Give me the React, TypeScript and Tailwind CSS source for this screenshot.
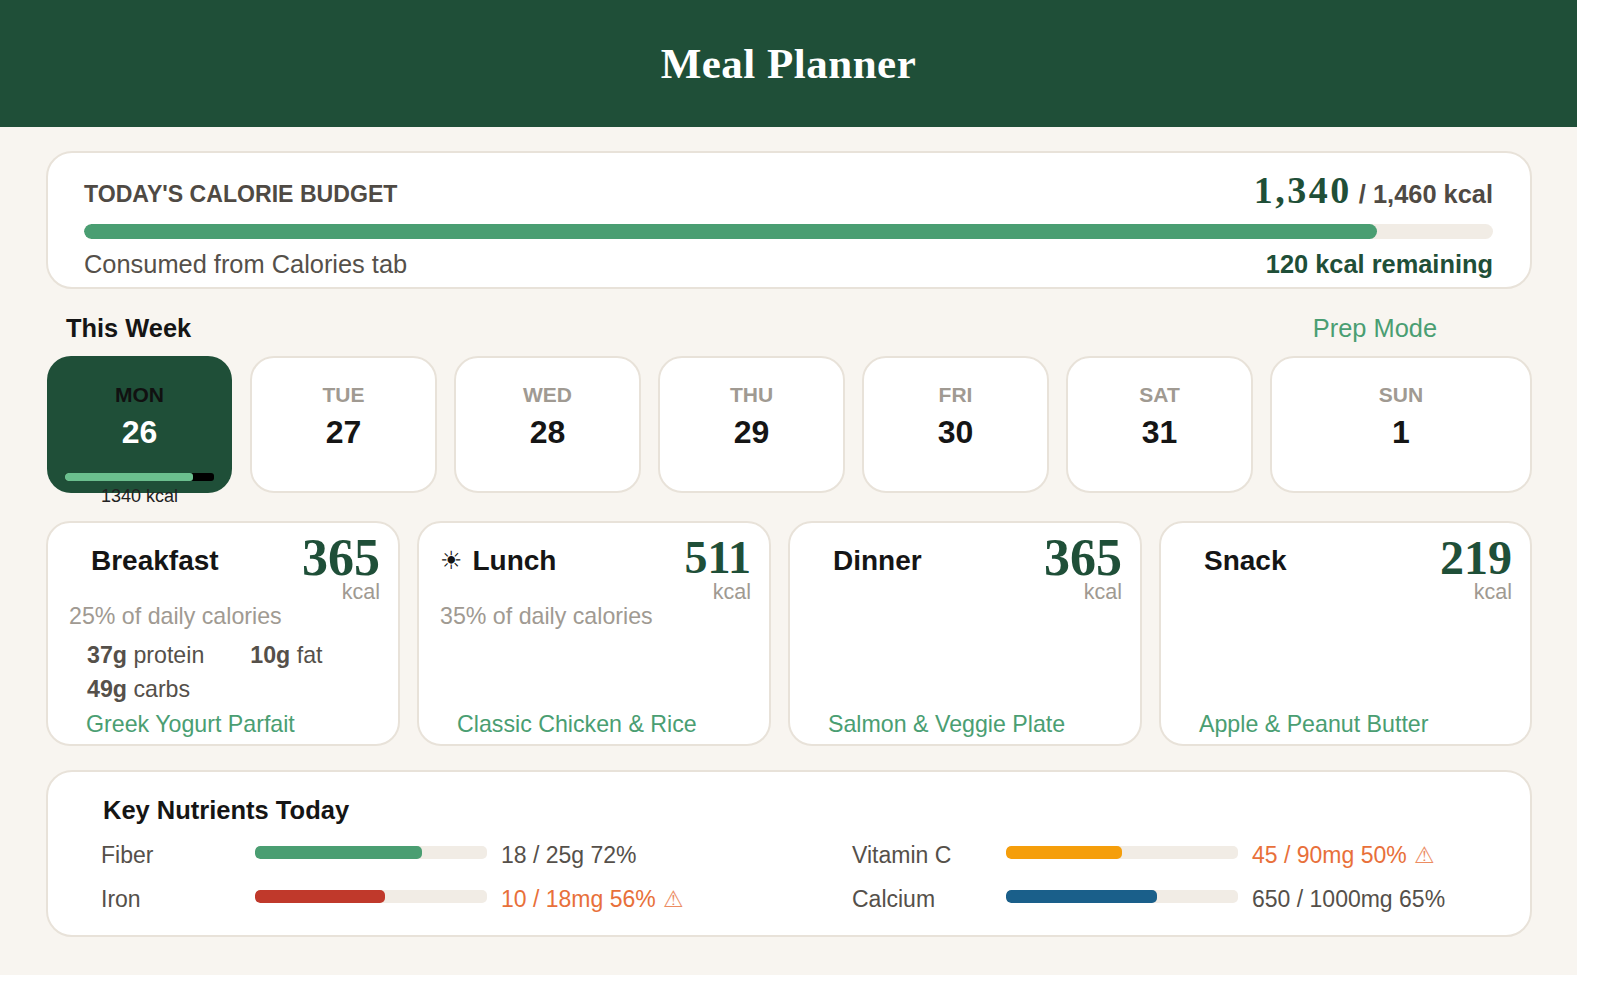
const sans = "font-['Liberation_Sans',Arial,sans-serif]";

const days = [
  { name: 'MON', num: '26', active: true },
  { name: 'TUE', num: '27' },
  { name: 'WED', num: '28' },
  { name: 'THU', num: '29' },
  { name: 'FRI', num: '30' },
  { name: 'SAT', num: '31' },
  { name: 'SUN', num: '1', wide: true },
];

const meals = [
  { title: 'Breakfast', kcal: '365', kcalSize: 'text-[52px]', pct: '25% of daily calories', dish: 'Greek Yogurt Parfait', titlePad: 'pl-[22px]', macros: true },
  { title: 'Lunch', icon: true, kcal: '511', kcalSize: 'text-[46px]', pct: '35% of daily calories', dish: 'Classic Chicken & Rice' },
  { title: 'Dinner', kcal: '365', kcalSize: 'text-[52px]', pct: '', dish: 'Salmon & Veggie Plate', titlePad: 'pl-[22px]' },
  { title: 'Snack', kcal: '219', kcalSize: 'text-[48px]', pct: '', dish: 'Apple & Peanut Butter', titlePad: 'pl-[22px]', wide: true },
];

function NutrientRow({ label, value, pct, bar, warn }: { label: string; value: string; pct: number; bar: string; warn?: boolean }) {
  return (
    <div className="flex items-center h-[44px]">
      <div className="w-[154px] text-[23px] text-[#55504a]">{label}</div>
      <div className="w-[232px] h-[13px] -mt-[5px] rounded-[5px] bg-[#f1ece5] overflow-hidden">
        <div className={`h-full rounded-[5px] ${bar}`} style={{ width: `${pct}%` }} />
      </div>
      <div className={`ml-[14px] text-[23px] leading-[30px] ${warn ? 'text-[#e8703a]' : 'text-[#55504a]'}`}>
        {value}
        {warn && <span className="ml-[7px] font-['DejaVu_Sans',sans-serif] text-[23px] leading-none font-light opacity-80">⚠</span>}
      </div>
    </div>
  );
}

export default function App() {
  return (
    <div className="min-h-[1000px] bg-white">
      <div className={`w-[1577px] h-[975px] bg-[#f8f5f0] ${sans}`}>
        <header className="h-[127px] pt-[2px] bg-[#1f4f38] flex items-center justify-center">
          <h1 className="font-['Liberation_Serif',serif] font-bold text-[43px] text-white tracking-[0.5px]">Meal Planner</h1>
        </header>

        <div className="pl-[46px] w-[1532px]">
          {/* Budget */}
          <section className="mt-[24px] h-[138px] rounded-[26px] border-2 border-[#e8e2d9] bg-white pl-[36px] pr-[37px] pt-[23px]">
            <div className="flex items-center justify-between h-[36px]">
              <span className="text-[23.1px] font-bold text-[#4f4a44]">TODAY'S CALORIE BUDGET</span>
              <span className="-mt-[9px] text-[25.4px] leading-[30px] font-bold text-[#4f4a44]">
                <span className="font-['Liberation_Serif',serif] text-[38px] leading-none tracking-[2.5px] text-[#1f4f38]">1,340</span> / 1,460 kcal
              </span>
            </div>
            <div className="mt-[12px] h-[15px] rounded-full bg-[#f1ece5] overflow-hidden">
              <div className="h-full w-[91.8%] rounded-full bg-[#4a9e72]" />
            </div>
            <div className="mt-[7px] flex items-center justify-between text-[25.4px] leading-[36px]">
              <span className="text-[#55504a]">Consumed from Calories tab</span>
              <span className="font-bold text-[#1f4f38]">120 kcal remaining</span>
            </div>
          </section>

          {/* Week header */}
          <div className="mt-[17px] h-[50px] flex items-center justify-between pl-[20px] pr-[95px] pb-[6px]">
            <span className="text-[25.4px] font-bold text-[#151515]">This Week</span>
            <span className="text-[25.4px] text-[#4a9e72]">Prep Mode</span>
          </div>

          {/* Days */}
          <div className="flex gap-[17px]">
            {days.map((d) => (
              <div
                key={d.name}
                className={`h-[137px] rounded-[24px] flex flex-col items-center ${d.wide ? 'w-[262px]' : d.active ? 'w-[185px] mx-[1px]' : 'w-[187px]'} ${d.active ? 'bg-[#1f4f38] pt-[25px]' : 'bg-white border-2 border-[#e8e2d9] pt-[23px]'}`}
              >
                <div className={`shrink-0 text-[21px] leading-[28px] font-bold ${d.active ? 'text-[#111111]' : 'text-[#a09a92]'}`}>{d.name}</div>
                <div className={`shrink-0 mt-[2px] text-[32px] leading-[42px] font-bold ${d.active ? 'text-white' : 'text-[#151515]'}`}>{d.num}</div>
                {d.active && (
                  <>
                    <div className="shrink-0 mt-[20px] w-[149px] h-[8px] rounded-[3px] bg-black overflow-hidden">
                      <div className="h-full w-[86%] rounded-[3px] bg-[#6bbf8e]" />
                    </div>
                    <div className="shrink-0 mt-[4px] text-[18px] leading-[22px] text-[#222222]">1340 kcal</div>
                  </>
                )}
              </div>
            ))}
          </div>

          {/* Meals */}
          <div className="mt-[28px] flex gap-[17px]">
            {meals.map((m) => (
              <div
                key={m.title}
                className={`h-[225px] rounded-[24px] border-2 border-[#e8e2d9] bg-white pl-[21px] pr-[18px] pt-[12px] flex flex-col ${m.wide ? 'w-[373px]' : 'w-[354px]'}`}
              >
                <div className="flex justify-between">
                  <div className={`mt-[8px] flex items-center h-[36px] text-[28px] font-bold text-[#151515] ${m.titlePad ?? ''}`}>
                    {m.icon && <span className="mr-[10px] font-['DejaVu_Sans',sans-serif] text-[25px] font-normal">☀</span>}
                    {m.title}
                  </div>
                  <div className="text-right">
                    <div className={`font-['Liberation_Serif',serif] font-bold leading-[46px] text-[#1f4f38] ${m.kcalSize}`}>{m.kcal}</div>
                    <div className="mt-[2px] text-[21.5px] leading-[18px] text-[#a09a92]">kcal</div>
                  </div>
                </div>
                <div className="h-[28px] mt-[1px] text-[23.2px] leading-[28px] text-[#a09a92]">{m.pct}</div>
                {m.macros && (
                  <div className="mt-[8px] pl-[18px] text-[23.2px] leading-[34px] text-[#55504a]">
                    <div className="flex gap-[46px]">
                      <span><b>37g</b> protein</span>
                      <span><b>10g</b> fat</span>
                    </div>
                    <div><b>49g</b> carbs</div>
                  </div>
                )}
                <div className="mt-auto mb-[3px] pl-[17px] text-[23.2px] leading-[34px] text-[#4a9e72]">{m.dish}</div>
              </div>
            ))}
          </div>

          {/* Nutrients */}
          <section className="mt-[24px] h-[167px] rounded-[26px] border-2 border-[#e8e2d9] bg-white pl-[53px] pt-[18px]">
            <div className="pl-[2px] text-[25.5px] leading-[40px] font-bold text-[#151515]">Key Nutrients Today</div>
            <div className="mt-[3px] grid grid-cols-[751px_1fr]">
              <NutrientRow label="Fiber" value="18 / 25g 72%" pct={72} bar="bg-[#4a9e72]" />
              <NutrientRow label="Vitamin C" value="45 / 90mg 50%" pct={50} bar="bg-[#f59e0b]" warn />
              <NutrientRow label="Iron" value="10 / 18mg 56%" pct={56} bar="bg-[#c0392b]" warn />
              <NutrientRow label="Calcium" value="650 / 1000mg 65%" pct={65} bar="bg-[#1a5f8a]" />
            </div>
          </section>
        </div>
      </div>
    </div>
  );
}
